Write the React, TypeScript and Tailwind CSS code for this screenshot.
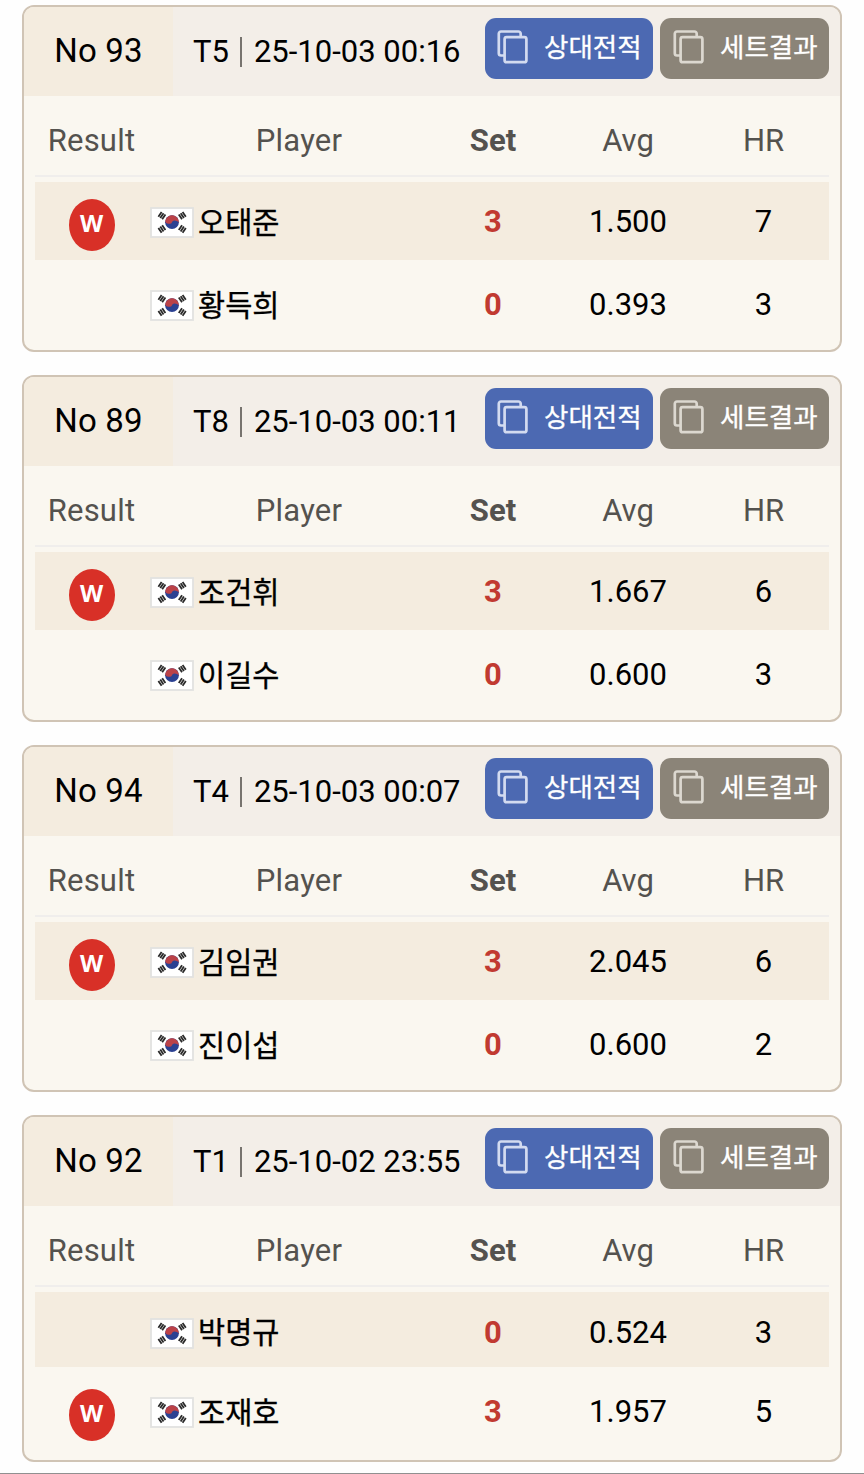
type Row = { win: boolean; name: string; set: string; avg: string; hr: string };
type Match = { no: string; table: string; time: string; rows: [Row, Row]; compact?: boolean };

const matches: Match[] = [
  {
    no: "No 93", table: "T5", time: "25-10-03 00:16",
    rows: [
      { win: true, name: "오태준", set: "3", avg: "1.500", hr: "7" },
      { win: false, name: "황득희", set: "0", avg: "0.393", hr: "3" },
    ],
  },
  {
    no: "No 89", table: "T8", time: "25-10-03 00:11",
    rows: [
      { win: true, name: "조건휘", set: "3", avg: "1.667", hr: "6" },
      { win: false, name: "이길수", set: "0", avg: "0.600", hr: "3" },
    ],
  },
  {
    no: "No 94", table: "T4", time: "25-10-03 00:07",
    rows: [
      { win: true, name: "김임권", set: "3", avg: "2.045", hr: "6" },
      { win: false, name: "진이섭", set: "0", avg: "0.600", hr: "2" },
    ],
  },
  {
    no: "No 92", table: "T1", time: "25-10-02 23:55", compact: true,
    rows: [
      { win: false, name: "박명규", set: "0", avg: "0.524", hr: "3" },
      { win: true, name: "조재호", set: "3", avg: "1.957", hr: "5" },
    ],
  },
];

function CopyIcon() {
  return (
    <svg className="h-[34px] w-8 shrink-0" viewBox="0 0 32 34" fill="none" stroke="currentColor" strokeWidth="2.7">
      <path d="M7.6 25.5H4a2.2 2.2 0 0 1-2.2-2.2V3.7A2.2 2.2 0 0 1 4 1.5h17.5a2.2 2.2 0 0 1 2.2 2.2V7.2" />
      <rect x="7.6" y="7.2" width="21.8" height="25" rx="2" />
    </svg>
  );
}

function Trigram({ x, y, angle }: { x: number; y: number; angle: number }) {
  return (
    <g transform={`translate(${x} ${y}) rotate(${angle})`} stroke="#2a2a2a" strokeWidth="1.8">
      <path d="M-2.9-2.3H2.9M-2.9 0H2.9M-2.9 2.3H2.9" />
    </g>
  );
}

function KoreaFlag() {
  return (
    <svg className="h-[31px] w-11 shrink-0 translate-y-px" viewBox="0 0 44 31">
      <rect x="1" y="1" width="42" height="29" fill="#fff" stroke="#e2e2e0" strokeWidth="1.8" />
      <circle cx="22" cy="15.2" r="6.9" fill="#2b4192" />
      <path
        transform="translate(22 15.2) rotate(15)"
        d="M-6.9 0A6.9 6.9 0 0 1 6.9 0A3.45 2.4 0 0 0 0 0A3.45 2.4 0 0 1-6.9 0Z"
        fill="#bb4248"
      />
      <Trigram x={11.9} y={8.6} angle={-56} />
      <Trigram x={32.3} y={8.6} angle={56} />
      <Trigram x={11.9} y={22} angle={56} />
      <Trigram x={32.3} y={22} angle={-56} />
    </svg>
  );
}

function ActionButton({ label, blue }: { label: string; blue?: boolean }) {
  return (
    <button
      className={`flex h-[61px] shrink-0 items-center rounded-[11px] pb-0.5 text-[26.5px] font-normal text-white ${
        blue ? "w-[168px] bg-[#4c69b2] pl-3" : "w-[169px] bg-[#8b8478] pl-[13px]"
      }`}
    >
      <span className={blue ? "text-[#d3dbf0]" : "text-[#dcd8d0]"}>
        <CopyIcon />
      </span>
      <span className="ml-[15px] translate-y-px whitespace-nowrap leading-none [-webkit-text-stroke:0.3px_white]">{label}</span>
    </button>
  );
}

const columns = "grid grid-cols-[113px_302px_86px_184px_87px] items-center";

function PlayerRow({ row, className }: { row: Row; className: string }) {
  return (
    <div className={`${columns} ${className}`}>
      <div className="flex justify-center">
        {row.win && (
          <span className="flex h-[52px] w-[46px] translate-y-[3px] items-center justify-center rounded-[50%] bg-[#d83027] pb-[3px] font-['Noto_Sans',sans-serif] text-[24px] font-bold leading-none text-white">
            W
          </span>
        )}
      </div>
      <div className="flex items-center pl-0.5">
        <KoreaFlag />
        <span className="ml-1 translate-y-0.5 whitespace-nowrap text-[29.5px] leading-none [-webkit-text-stroke:0.3px_black]">{row.name}</span>
      </div>
      <div className="text-center font-bold text-[#c13a31]">{row.set}</div>
      <div className="text-center">{row.avg}</div>
      <div className="text-center">{row.hr}</div>
    </div>
  );
}

function MatchCard({ match }: { match: Match }) {
  return (
    <section className="h-[347px] overflow-hidden rounded-[12px] border-2 border-[#d0c4b5] bg-[#faf7f0]">
      <header className="flex h-[89px] bg-[#f3eee8]">
        <div className="flex w-[149px] shrink-0 items-center justify-center bg-[#f4ecdf] pb-[3px] text-[33px] leading-none tracking-[0.2px]">
          {match.no}
        </div>
        <div className="flex w-[312px] shrink-0 items-center pl-5 text-[31px] leading-none">
          <span>{match.table}</span>
          <span className="ml-[11px] h-[30px] w-0.5 bg-[#77736e]" />
          <span className="ml-3 whitespace-nowrap">{match.time}</span>
        </div>
        <div className="flex gap-[7px] pt-[10.5px]">
          <ActionButton label="상대전적" blue />
          <ActionButton label="세트결과" />
        </div>
      </header>
      <div className="px-[11px] text-[31px] leading-none">
        <div className={`${columns} h-[81px] border-b-2 border-[#f0eeec] pt-2.5 text-[#54524e]`}>
          <div className="text-center tracking-[0.2px]">Result</div>
          <div className="text-center tracking-[0.2px]">Player</div>
          <div className="text-center font-bold">Set</div>
          <div className="text-center">Avg</div>
          <div className="text-center">HR</div>
        </div>
        <PlayerRow
          row={match.rows[0]}
          className={match.compact ? "mt-[5px] h-[75px] bg-[#f4ecdf] pt-[5px]" : "mt-[5px] h-[78px] bg-[#f4ecdf] pt-px"}
        />
        <PlayerRow row={match.rows[1]} className="h-[89px]" />
      </div>
    </section>
  );
}

export default function App() {
  return (
    <main className="h-[1474px] overflow-hidden border-b border-[#909090] bg-[#fefefe] pt-[5px] font-['Roboto','Noto_Sans_CJK_KR',sans-serif] text-black">
      <div className="flex flex-col gap-[23px] px-[22px]">
        {matches.map((match) => (
          <MatchCard key={match.no} match={match} />
        ))}
      </div>
    </main>
  );
}
